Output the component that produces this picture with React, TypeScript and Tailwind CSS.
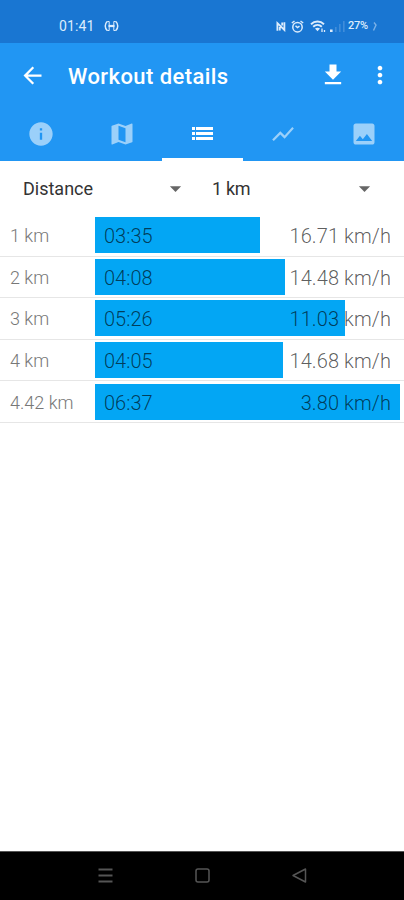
import {
  MdArrowBack,
  MdArrowDropDown,
  MdFileDownload,
  MdImage,
  MdInfo,
  MdMoreVert,
  MdShowChart,
} from "react-icons/md";

const laps = [
  { label: "1 km", time: "03:35", speed: "16.71 km/h", width: 165 },
  { label: "2 km", time: "04:08", speed: "14.48 km/h", width: 190 },
  { label: "3 km", time: "05:26", speed: "11.03 km/h", width: 250 },
  { label: "4 km", time: "04:05", speed: "14.68 km/h", width: 188 },
  { label: "4.42 km", time: "06:37", speed: "3.80 km/h", width: 305 },
];

function StatusBar() {
  return (
    <div className="flex h-[43px] items-center bg-[#1976d2] pt-[9px] pl-[59px] text-[#dcecfc]">
      <span className="w-[45px] pt-px text-[14px] tracking-[0.1px]">01:41</span>
      {/* hotspot */}
      <svg className="h-[12px] w-[15px]" viewBox="0 0 15 12" fill="none" stroke="currentColor" strokeWidth="1.5">
        <path d="M3.2 1.5C.6 4 .6 8 3.2 10.5M11.8 1.5c2.6 2.5 2.6 6.5 0 9" />
        <path d="M5.2 1.5v9M9.8 1.5v9M3.2 1.5h2M3.2 10.5h2M9.8 1.5h2M9.8 10.5h2" strokeWidth="1" />
        <path d="M4.5 6h6" strokeWidth="2.2" />
      </svg>
      <div className="ml-auto flex items-center pr-[27px]">
        <svg className="h-[11px] w-[10px]" viewBox="0 0 10 11" fill="none" stroke="currentColor" strokeWidth="1.8">
          <path d="M1.4 9.8V2.2L8.4 9V1.2M3.8 9.6V6M6.2 1.6v3" />
        </svg>
        <svg className="ml-[5px] h-[13px] w-[13px]" viewBox="0 0 13 13" fill="none" stroke="currentColor" strokeWidth="1.5">
          <circle cx="6.5" cy="7.2" r="4.7" />
          <path d="M.8 3 3.5 1M12.2 3 9.5 1M4.5 5.8l2 1.8 2-1.4" />
        </svg>
        <svg className="ml-[6px] h-[13px] w-[16px]" viewBox="0 0 16 13" fill="none" stroke="currentColor" strokeWidth="1.9">
          <path d="M1 4.2c3.7-3.6 9.3-3.6 13 0M3.2 6.7c2.5-2.4 6.1-2.4 8.6 0" />
          <path d="M5 8.6c1.5-1.3 3.5-1.3 5 0L7.5 11.3z" fill="currentColor" stroke="none" />
          <path d="M12 8.5v3.5M14.5 10v2" strokeWidth="1.3" />
        </svg>
        <svg className="ml-[4px] h-[13px] w-[15px]" viewBox="0 0 15 13" fill="currentColor">
          <path d="M0 9.5h2.6V12H0z" />
          <path d="M5 7h1.6v5H5zM9 4h1.6v8H9zM13 1h1.6v11H13z" opacity=".2" />
        </svg>
        <span className="ml-[3px] w-[21px] pt-px text-[11px] font-medium tracking-[-0.2px]">27%</span>
        <svg className="ml-[3px] h-[11px] w-[5px]" viewBox="0 0 5 11" fill="none" stroke="currentColor" strokeWidth="1.4" opacity=".5">
          <path d="M2 1.5 4 4 1.5 9.5" />
        </svg>
      </div>
    </div>
  );
}

function Toolbar() {
  return (
    <div className="flex h-[64px] items-center pl-[19px] text-white">
      <MdArrowBack className="size-[27px]" />
      <h1 className="ml-[22px] pt-[2px] text-[22px] font-medium tracking-[0.42px]">Workout details</h1>
      <MdFileDownload className="ml-auto size-[28px]" />
      <MdMoreVert className="mr-[10px] ml-[19px] size-[28px]" />
    </div>
  );
}

function Tabs() {
  return (
    <nav className="grid h-[54px] grid-cols-5 pl-px text-white/55">
      <div className="flex items-center justify-center pb-px"><MdInfo className="size-[28px]" /></div>
      <div className="flex items-center justify-center pb-px">
        <svg className="size-[28px]" viewBox="0 0 24 24" fill="currentColor">
          <path d="M20.5 3l-.16.03L15 5.1 9 3 3.36 4.9c-.21.07-.36.25-.36.48V20.5c0 .28.22.5.5.5l.16-.03L9 18.9l6 2.1 5.64-1.9c.21-.07.36-.25.36-.48V3.5c0-.28-.22-.5-.5-.5zM15 19l-6-2.11V5l6 2.11V19z" />
        </svg>
      </div>
      <div className="flex items-center justify-center border-b-3 border-white pt-px text-white">
        <svg className="h-[13px] w-[21px]" viewBox="0 0 21 13" fill="currentColor">
          <path d="M0 0h3v3H0zM4 0h17v3H4zM0 5h3v3H0zM4 5h17v3H4zM0 10h3v3H0zM4 10h17v3H4z" />
        </svg>
      </div>
      <div className="flex items-center justify-center"><MdShowChart className="size-[26px]" /></div>
      <div className="flex items-center justify-center pb-px"><MdImage className="size-[28px]" /></div>
    </nav>
  );
}

export default function App() {
  return (
    <div className="flex h-[900px] w-[404px] flex-col overflow-hidden bg-white font-['Roboto',sans-serif]">
      <StatusBar />
      <header className="bg-[#2196f3]">
        <Toolbar />
        <Tabs />
      </header>

      <div className="flex h-[54px] shrink-0 items-center pl-[23px] text-[18px] text-[#333]">
        <span className="w-[139px]">Distance</span>
        <MdArrowDropDown className="size-[27px] text-[#666]" />
        <span className="ml-[23px] w-[139px] tracking-[-0.3px]">1 km</span>
        <MdArrowDropDown className="size-[27px] text-[#666]" />
      </div>

      <ul>
        {laps.map((lap) => (
          <li key={lap.label} className="flex h-[41.6px] items-center border-b border-[#e6e6e6] pl-[10px] font-light">
            <span className="w-[85px] pt-px text-[18px] text-[#777]">{lap.label}</span>
            <div className="relative h-[36px] w-[305px]">
              <div className="h-full bg-[#03a6f4]" style={{ width: lap.width }} />
              {/* values lie over the bar */}
              <div className="absolute inset-0 flex items-center justify-between pt-[2px] pr-[9px] pl-[9px] text-[20px] text-black/65">
                <span>{lap.time}</span>
                <span className="tracking-[0.1px]">{lap.speed}</span>
              </div>
            </div>
          </li>
        ))}
      </ul>

      <footer className="mt-auto flex h-[49px] items-center justify-center gap-[82px] border-t border-[#555] bg-black pb-px text-[#555]">
        <svg className="size-[15px]" viewBox="0 0 15 15" stroke="currentColor" strokeWidth="1.8">
          <path d="M.5 1.5h14M.5 7.5h14M.5 13.5h14" />
        </svg>
        <svg className="size-[15px]" viewBox="0 0 15 15" fill="none" stroke="currentColor" strokeWidth="1.5">
          <rect x="1" y="1" width="13" height="13" rx="2" />
        </svg>
        <svg className="size-[15px]" viewBox="0 0 15 15" fill="none" stroke="currentColor" strokeWidth="1.5" strokeLinejoin="round">
          <path d="M1 7.5 13.5 1v13z" />
        </svg>
      </footer>
    </div>
  );
}
